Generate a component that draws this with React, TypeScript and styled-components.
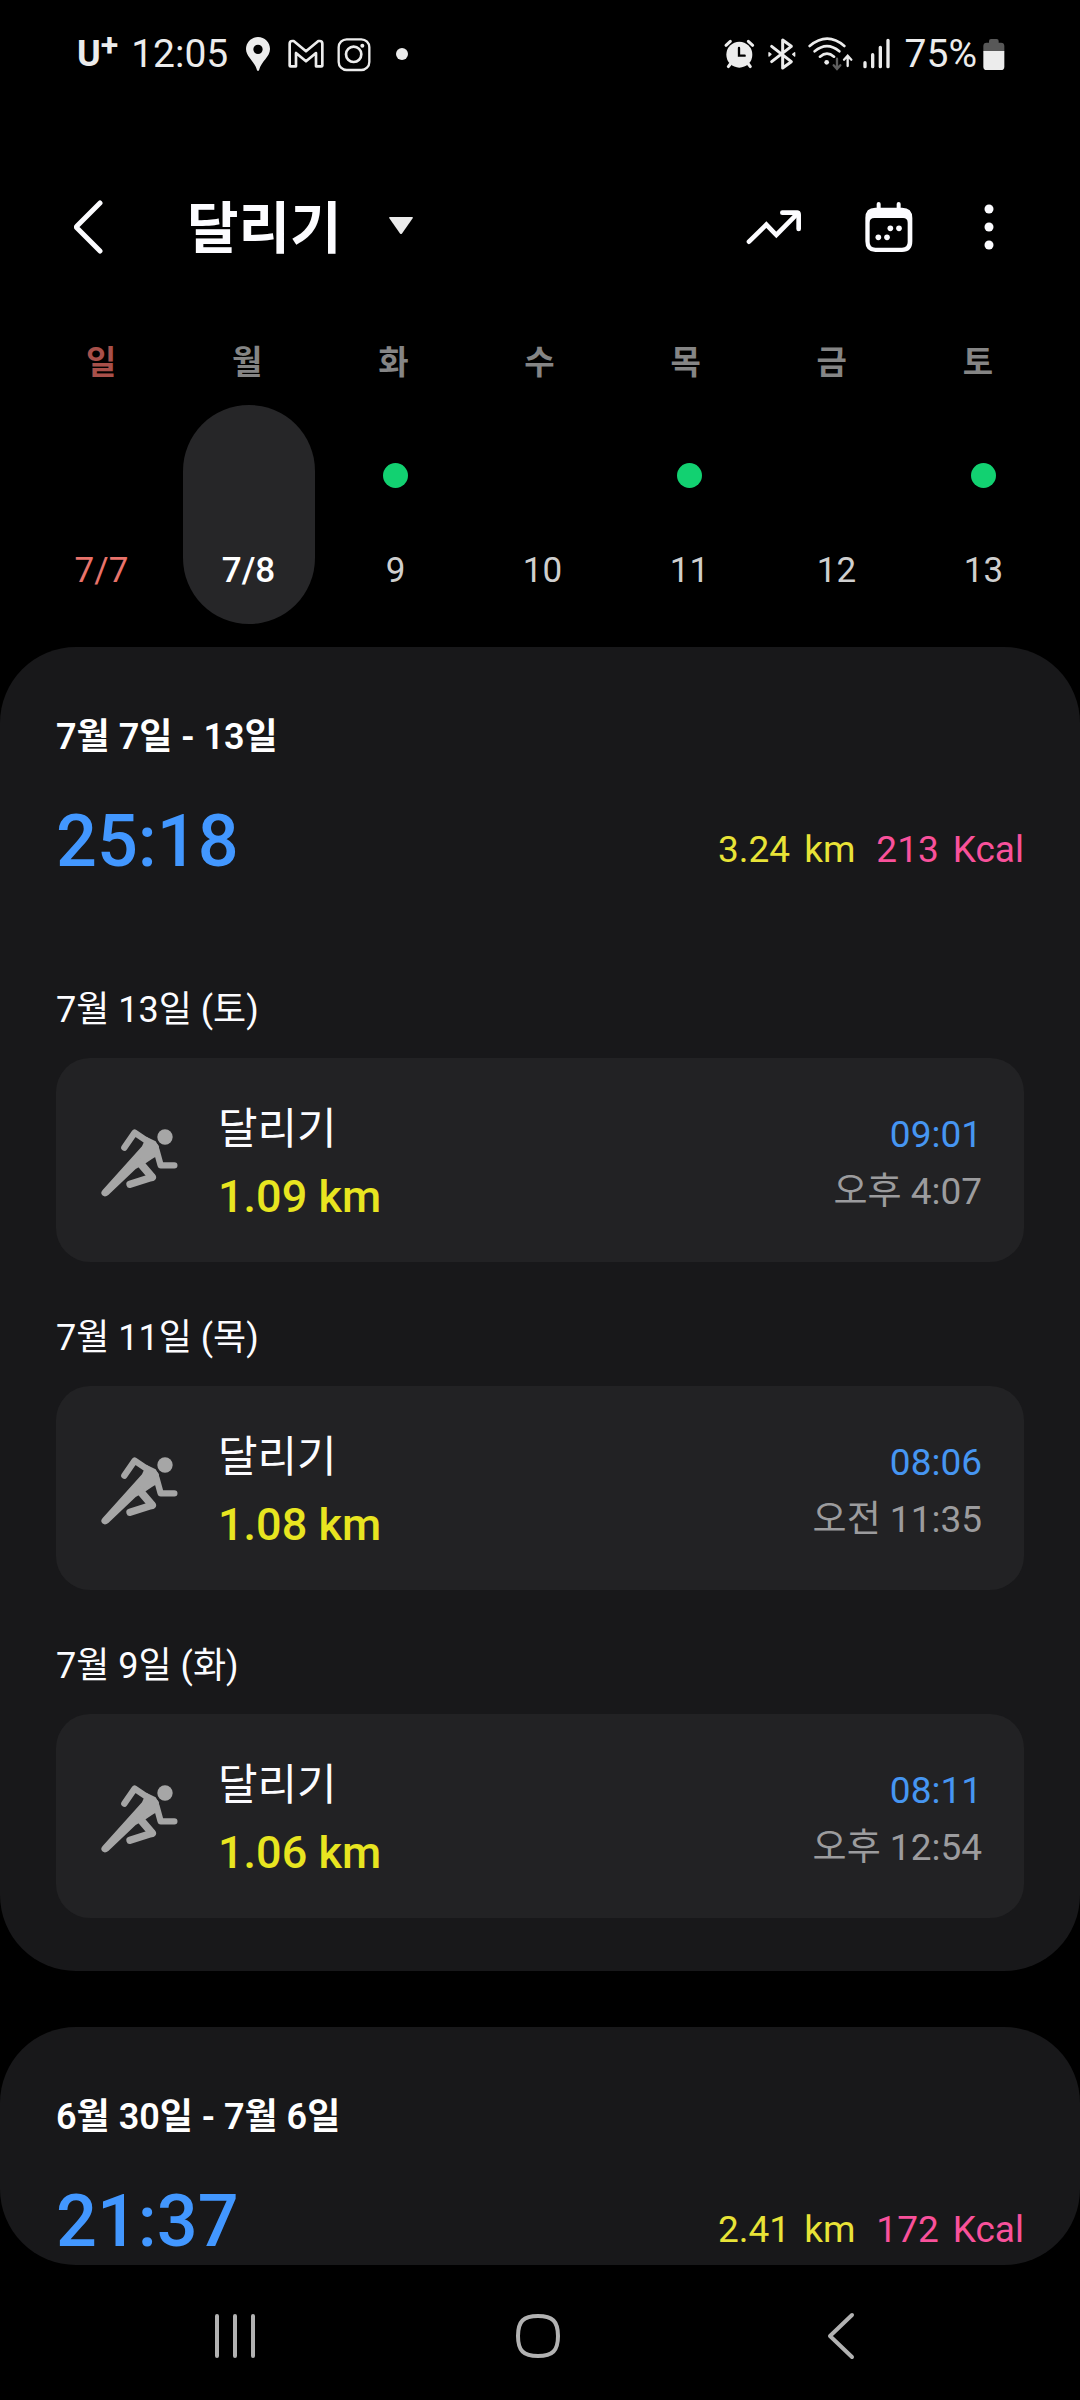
import React from "react";
import styled, { createGlobalStyle } from "styled-components";

const GlobalStyle = createGlobalStyle`
  * { box-sizing: border-box; }
  body {
    margin: 0;
    background: #000;
    color: #fcfcff;
    font-family: Roboto, "Noto Sans CJK KR", sans-serif;
    font-size: 36px;
    line-height: 48px;
  }
  h1, h2, h3, p, ul { margin: 0; padding: 0; font: inherit; list-style: none; }
  button, select {
    margin: 0;
    padding: 0;
    border: 0;
    background: none;
    color: inherit;
    font: inherit;
    cursor: pointer;
  }
  svg { display: block; flex: none; }
`;

const Screen = styled.div`
  display: flex;
  flex-direction: column;
  min-height: 100vh;
`;

/* ---------- status bar ---------- */

const StatusBar = styled.div`
  display: flex;
  justify-content: space-between;
  align-items: center;
  height: 108px;
  padding: 0 75px 0 77px;
  color: #ececec;
  font-size: 39px;
`;

const StatusGroup = styled.div<{ $gap: number }>`
  display: flex;
  align-items: center;
  gap: ${(p) => p.$gap}px;
`;

const Carrier = styled.span`
  display: flex;
  font-size: 36px;
  font-weight: 700;
`;

const CarrierPlus = styled.span`
  font-size: 32px;
  line-height: 30px;
`;

/* ---------- app header ---------- */

const Header = styled.header`
  display: flex;
  align-items: center;
  padding: 89px 74px 82px 61px;
`;

const IconButton = styled.button<{ $width: number }>`
  display: flex;
  justify-content: center;
  align-items: center;
  width: ${(p) => p.$width}px;
  height: 60px;
`;

const ActivityPicker = styled.label`
  display: flex;
  align-items: center;
  gap: 47px;
  margin-left: 70px;
`;

const ActivitySelect = styled.select`
  appearance: none;
  height: 60px;
  padding-top: 4px;
  font-size: 56px;
  font-weight: 700;
  line-height: 56px;
  outline: none;
`;

const HeaderActions = styled.div`
  display: flex;
  gap: 51px;
  margin-left: auto;
`;

/* ---------- week strip ---------- */

const Weekdays = styled.div`
  display: grid;
  grid-template-columns: repeat(7, 1fr);
  padding: 0 29px 0 28px;
  font-size: 33px;
  font-weight: 700;
  text-align: center;
`;

const Weekday = styled.span<{ $sunday: boolean }>`
  color: ${(p) => (p.$sunday ? "#a8504a" : "#858585")};
`;

const Days = styled.div`
  display: grid;
  grid-template-columns: repeat(7, 1fr);
  justify-items: center;
  padding: 18px 23px 23px 28px;
`;

const Day = styled.button<{ $selected: boolean; $sunday: boolean }>`
  display: flex;
  flex-direction: column;
  align-items: center;
  gap: 59px;
  width: 132px;
  padding: 58px 0 29px;
  border-radius: 66px;
  background: ${(p) => (p.$selected ? "#262628" : "transparent")};
  color: ${(p) => (p.$selected ? "#fff" : p.$sunday ? "#e9736b" : "#cfcfcf")};
  font-size: 35px;
  font-weight: ${(p) => (p.$selected ? 500 : 400)};
`;

const DayDot = styled.span<{ $on: boolean }>`
  width: 25px;
  height: 25px;
  border-radius: 50%;
  background: ${(p) => (p.$on ? "#12d171" : "transparent")};
`;

/* ---------- weekly cards ---------- */

const Weeks = styled.main`
  display: flex;
  flex-direction: column;
  gap: 56px;
`;

const WeekCard = styled.section`
  padding: 66px 56px 0;
  border-radius: 76px;
  background: #18181a;
`;

const WeekTitle = styled.h2`
  font-weight: 600;
  color: #fff;
`;

const Summary = styled.div`
  display: flex;
  justify-content: space-between;
  align-items: flex-end;
  margin-top: 37px;
`;

const TotalTime = styled.p`
  color: #4297ff;
  font-size: 72px;
  font-weight: 500;
  line-height: 87px;
`;

const Totals = styled.div`
  display: flex;
  gap: 21px;
  padding-bottom: 11px;
  font-size: 37px;
`;

const Total = styled.p<{ $color: string }>`
  display: flex;
  gap: 14px;
  color: ${(p) => p.$color};
`;

const RunList = styled.ul`
  display: flex;
  flex-direction: column;
  gap: 52px;
  padding: 101px 0 53px;
`;

const RunCard = styled.button`
  display: flex;
  align-items: center;
  width: 100%;
  margin-top: 24px;
  padding: 37px 42px 31px;
  border-radius: 34px;
  background: #222224;
  text-align: left;
`;

const RunMain = styled.span`
  display: flex;
  flex-direction: column;
  margin-left: 36px;
  font-size: 43px;
  line-height: 68px;
`;

const Distance = styled.span`
  color: #e8e520;
  font-size: 45px;
  font-weight: 500;
`;

const RunSide = styled.span`
  display: flex;
  flex-direction: column;
  align-items: flex-end;
  margin-left: auto;
  font-size: 37px;
  line-height: 57px;
`;

const Duration = styled.span`
  color: #4696f2;
`;

const StartTime = styled.span`
  color: #9c9c9e;
`;

/* ---------- system navigation ---------- */

const NavBar = styled.nav`
  display: grid;
  grid-template-columns: repeat(3, 1fr);
  align-items: center;
  justify-items: center;
  height: 135px;
  margin-top: auto;
  padding: 6px 88px 0 84px;
`;

/* ---------- drawings ---------- */

const PinIcon = () => (
  <svg width="34" height="36" viewBox="577 48 102 108" fill="#ececec">
    <path fillRule="evenodd" d="M628 51c-20 0-36 16-36 36 0 24 26 36 33 64q3 4 6 0c7-28 33-40 33-64 0-20-16-36-36-36zm0 23a14 14 0 1 1 0 28 14 14 0 1 1 0-28z" />
  </svg>
);

const MailIcon = () => (
  <svg width="36" height="36" viewBox="716 48 108 108" fill="none" stroke="#ececec" strokeWidth="8" strokeLinejoin="round">
    <path d="M721 71q0-8 8-8h4l37 31 37-31h4q8 0 8 8v66q0 2-3 2h-16v-40l-30 25-30-25v40h-16q-3 0-3-2z" />
  </svg>
);

const CameraIcon = () => (
  <svg width="34" height="36" viewBox="860 48 102 108" fill="none" stroke="#ececec" strokeWidth="7">
    <rect x="865" y="58" width="92" height="92" rx="24" />
    <circle cx="910" cy="103" r="23" strokeWidth="8" />
    <circle cx="936" cy="77" r="6" fill="#ececec" stroke="none" />
  </svg>
);

const MoreDot = () => (
  <svg width="34" height="36" viewBox="1003 48 102 108" fill="#ececec">
    <circle cx="1057" cy="102" r="18" />
  </svg>
);

const AlarmIcon = () => (
  <svg width="34" height="36" viewBox="61 48 102 108" stroke="#ececec" strokeLinecap="round" fill="none">
    <circle cx="113" cy="104" r="39" fill="#ececec" stroke="none" />
    <path d="M73 76l13-12M153 76l-13-12" strokeWidth="9" />
    <path d="M86 132l-6 8M140 132l6 8" strokeWidth="9" />
    <path d="M112 84v23h17" stroke="#000" strokeWidth="7" />
  </svg>
);

const BluetoothIcon = () => (
  <svg width="34" height="36" viewBox="193 48 102 108" stroke="#ececec" strokeWidth="9" strokeLinecap="round" strokeLinejoin="round" fill="none">
    <path d="M213 79l59 46-26 19V60l26 19-59 46" />
    <path d="M205 98l6 5-6 5zM282 98l-6 5 6 5z" strokeWidth="4" fill="#ececec" />
  </svg>
);

const WifiIcon = () => (
  <svg width="46" height="36" viewBox="326 48 138 108" stroke="#ececec" strokeWidth="8" strokeLinecap="round" fill="none">
    <path d="M331 78q53-44 104 0M346 94q37-31 74 0M362 110q21-18 42 0" />
    <circle cx="382" cy="127" r="7" fill="#ececec" stroke="none" />
    <path d="M413 116v29M403 136l10 11 10-11" stroke="#5e5e5e" strokeWidth="7" />
    <path d="M445 138v-29M434 119l11-12 11 12" strokeWidth="7" />
  </svg>
);

const SignalIcon = () => (
  <svg width="28" height="36" viewBox="489 48 84 108" stroke="#ececec" strokeWidth="10" strokeLinecap="round">
    <path d="M495 128v12M518 104v36M541 82v58M564 61v79" />
  </svg>
);

const BatteryIcon = () => (
  <svg width="22" height="36" viewBox="848 48 66 108">
    <path d="M849 94V78q0-10 10-10h7v-5q0-6 6-6h17q6 0 6 6v5h7q10 0 10 10v16z" fill="#585858" />
    <path d="M849 93h63v47q0 10-10 10h-43q-10 0-10-10z" fill="#ececec" />
  </svg>
);

const BackIcon = () => (
  <svg width="30" height="54" viewBox="0 0 30 54" fill="none" stroke="#fcfcff" strokeWidth="5" strokeLinecap="round" strokeLinejoin="round">
    <path d="M26 3L3 26q-1 1 0 2l23 23" />
  </svg>
);

const CaretIcon = () => (
  <svg width="24" height="24" viewBox="0 0 24 24" fill="#ebebeb">
    <path d="M1 2h22q1.500 0 .5 1.500L13 18.500q-1 1.200-2 0L.5 3.500Q-.5 2 1 2z" />
  </svg>
);

const TrendIcon = () => (
  <svg width="60" height="60" viewBox="70 81 180 180" fill="none" stroke="#fcfcff" strokeWidth="14" strokeLinecap="round">
    <path d="M85 215l52-51 30 31 64-65" strokeLinejoin="miter" />
    <path d="M185 128h43q6 0 6 6v43" />
  </svg>
);

const CalendarIcon = () => (
  <svg width="60" height="60" viewBox="415 81 180 180" fill="#fcfcff">
    <path d="M474 102v20M534 102v20" stroke="#fcfcff" strokeWidth="12" strokeLinecap="round" />
    <path fillRule="evenodd" d="M464 113h80q31 0 31 31v70q0 32-31 32h-80q-30 0-30-32v-70q0-31 30-31zM461 144q-14 0-14 14v58q0 17 17 17h80q17 0 17-17v-58q0-14-14-14z" />
    <circle cx="509" cy="175" r="8.500" />
    <circle cx="535" cy="175" r="8.500" />
    <circle cx="473" cy="202" r="8.500" />
    <circle cx="499" cy="202" r="8.500" />
  </svg>
);

const MoreIcon = () => (
  <svg width="12" height="60" viewBox="0 0 12 60" fill="#fcfcff">
    <circle cx="6" cy="12" r="4.500" />
    <circle cx="6" cy="30" r="4.500" />
    <circle cx="6" cy="48" r="4.500" />
  </svg>
);

const RunnerIcon = () => (
  <svg width="84" height="72" viewBox="174 262 252 216" fill="none" stroke="#a6a6a6" strokeLinecap="round" strokeLinejoin="round">
    <circle cx="375" cy="292" r="23" fill="#a6a6a6" stroke="none" />
    <path d="M253 324l31-45 62 42" strokeWidth="19" />
    <path d="M349 330l13 47h41" strokeWidth="19" />
    <path d="M306 320l-118 131q-8 9-1 16 8 7 18-1l82-78 30-17 20-14q22-10 20-36l-10-16-28-14z" fill="#a6a6a6" stroke="none" />
    <path d="M300 370l36 42" strokeWidth="24" />
    <path d="M336 413l-66 21" strokeWidth="22" />
  </svg>
);

const RecentsIcon = () => (
  <svg width="42" height="46" viewBox="0 0 42 46" stroke="#b2b2b2" strokeWidth="4" strokeLinecap="round">
    <path d="M3 3v40M21 3v40M39 3v40" />
  </svg>
);

const HomeIcon = () => (
  <svg width="46" height="46" viewBox="0 0 46 46" fill="none" stroke="#b2b2b2" strokeWidth="4">
    <path d="M23 3q11 0 15.500 4.500T43 23t-4.500 15.500T23 43 7.500 38.500 3 23 7.500 7.500 23 3z" />
  </svg>
);

const NavBackIcon = () => (
  <svg width="30" height="48" viewBox="0 0 30 48" fill="none" stroke="#b2b2b2" strokeWidth="4" strokeLinecap="round" strokeLinejoin="round">
    <path d="M26 3L4 24l22 21" />
  </svg>
);

/* ---------- data ---------- */

const WEEKDAYS = ["일", "월", "화", "수", "목", "금", "토"];

const DAYS = [
  { label: "7/7", ran: false },
  { label: "7/8", ran: false },
  { label: "9", ran: true },
  { label: "10", ran: false },
  { label: "11", ran: true },
  { label: "12", ran: false },
  { label: "13", ran: true },
];

const WEEKS = [
  {
    title: "7월 7일 - 13일",
    time: "25:18",
    km: "3.24",
    kcal: "213",
    runs: [
      { date: "7월 13일 (토)", km: "1.09 km", duration: "09:01", start: "오후 4:07" },
      { date: "7월 11일 (목)", km: "1.08 km", duration: "08:06", start: "오전 11:35" },
      { date: "7월 9일 (화)", km: "1.06 km", duration: "08:11", start: "오후 12:54" },
    ],
  },
  { title: "6월 30일 - 7월 6일", time: "21:37", km: "2.41", kcal: "172", runs: [] },
];

export default function App() {
  const [selected, setSelected] = React.useState(1);

  return (
    <Screen>
      <GlobalStyle />
      <StatusBar>
        <StatusGroup $gap={13}>
          <Carrier>
            U<CarrierPlus>+</CarrierPlus>
          </Carrier>
          <span>12:05</span>
          <PinIcon />
          <MailIcon />
          <CameraIcon />
          <MoreDot />
        </StatusGroup>
        <StatusGroup $gap={14}>
          <StatusGroup $gap={9}>
            <AlarmIcon />
            <BluetoothIcon />
            <WifiIcon />
            <SignalIcon />
          </StatusGroup>
          <StatusGroup $gap={6}>
            <span>75%</span>
            <BatteryIcon />
          </StatusGroup>
        </StatusGroup>
      </StatusBar>

      <Header>
        <IconButton $width={56} aria-label="뒤로">
          <BackIcon />
        </IconButton>
        <ActivityPicker>
          <ActivitySelect aria-label="운동 종류">
            <option>달리기</option>
          </ActivitySelect>
          <CaretIcon />
        </ActivityPicker>
        <HeaderActions>
          <IconButton $width={64} aria-label="추세">
            <TrendIcon />
          </IconButton>
          <IconButton $width={64} aria-label="달력">
            <CalendarIcon />
          </IconButton>
          <IconButton $width={34} aria-label="더보기">
            <MoreIcon />
          </IconButton>
        </HeaderActions>
      </Header>

      <Weekdays>
        {WEEKDAYS.map((name, i) => (
          <Weekday key={name} $sunday={i === 0}>
            {name}
          </Weekday>
        ))}
      </Weekdays>
      <Days>
        {DAYS.map((day, i) => (
          <Day
            key={day.label}
            $selected={i === selected}
            $sunday={i === 0}
            onClick={() => setSelected(i)}
          >
            <DayDot $on={day.ran} />
            <span>{day.label}</span>
          </Day>
        ))}
      </Days>

      <Weeks>
        {WEEKS.map((week) => (
          <WeekCard key={week.title}>
            <WeekTitle>{week.title}</WeekTitle>
            <Summary>
              <TotalTime>{week.time}</TotalTime>
              <Totals>
                <Total $color="#e8e337">
                  <span>{week.km}</span>
                  <span>km</span>
                </Total>
                <Total $color="#f9519b">
                  <span>{week.kcal}</span>
                  <span>Kcal</span>
                </Total>
              </Totals>
            </Summary>
            {week.runs.length > 0 && (
              <RunList>
                {week.runs.map((run) => (
                  <li key={run.date}>
                    <h3>{run.date}</h3>
                    <RunCard>
                      <RunnerIcon />
                      <RunMain>
                        <span>달리기</span>
                        <Distance>{run.km}</Distance>
                      </RunMain>
                      <RunSide>
                        <Duration>{run.duration}</Duration>
                        <StartTime>{run.start}</StartTime>
                      </RunSide>
                    </RunCard>
                  </li>
                ))}
              </RunList>
            )}
          </WeekCard>
        ))}
      </Weeks>

      <NavBar>
        <IconButton $width={96} aria-label="최근 앱">
          <RecentsIcon />
        </IconButton>
        <IconButton $width={96} aria-label="홈">
          <HomeIcon />
        </IconButton>
        <IconButton $width={96} aria-label="이전">
          <NavBackIcon />
        </IconButton>
      </NavBar>
    </Screen>
  );
}
